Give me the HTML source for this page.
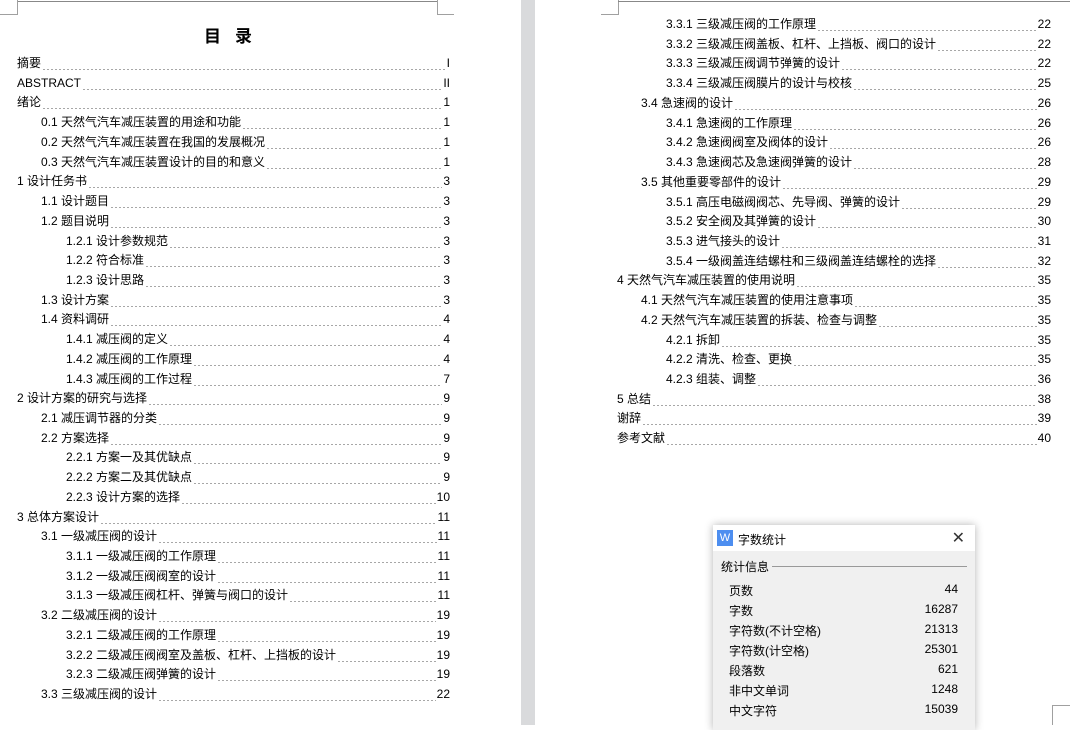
<!DOCTYPE html>
<html><head><meta charset="utf-8"><style>
*{margin:0;padding:0;box-sizing:border-box}
body{width:1070px;height:725px;position:relative;overflow:hidden;background:#fff;font-family:"Liberation Serif","Noto Serif CJK SC","Noto Sans CJK SC",serif;font-size:12px;color:#000}
.gap{position:absolute;left:521px;top:0;width:14px;height:725px;background:#d9dadc}
.ln{position:absolute;background:#a0a0a0}
.row{position:absolute;height:16px;display:flex;align-items:flex-end;line-height:14px;white-space:nowrap}
.row .t{font-family:"Liberation Sans","Noto Sans CJK SC",sans-serif}
.row .d{flex:1;height:14px;background-image:radial-gradient(circle,#333 0.6px,transparent 0.9px);background-size:4px 4px;background-position:0 12px;background-repeat:repeat-x;margin:0 1px}
.row .p{font-family:"Liberation Sans",sans-serif}
.title{position:absolute;left:0;width:470px;top:22px;text-align:center;font-size:17px;font-weight:bold;font-family:"Liberation Sans","Noto Sans CJK SC",sans-serif;letter-spacing:14px}
.dlg{position:absolute;left:713px;top:525px;width:262px;height:205px;background:#f0f0f0;box-shadow:0 0 8px rgba(0,0,0,.3);font-family:"Liberation Sans","Noto Sans CJK SC",sans-serif;font-size:12px}
.dlg .hd{height:26px;background:#fff;position:relative}
.dlg .ic{position:absolute;left:4px;top:5px;width:16px;height:16px;background:#4d8ef0;color:#fff;font-size:11px;text-align:center;line-height:16px}
.dlg .ht{position:absolute;left:25px;top:6px}
.dlg .x{position:absolute;right:10px;top:3px;font-size:16px;color:#333}
.dlg .sec{position:absolute;left:8px;top:33px}
.dlg .sl{position:absolute;left:59px;top:41px;width:195px;border-top:1px solid #999}
.dlg .r{position:absolute;left:16px;width:229px;display:flex;justify-content:space-between}
</style></head><body>
<div class="gap"></div>
<div class="ln" style="left:17px;top:1px;width:420px;height:1px;background:#888"></div>
<div class="ln" style="left:0;top:14px;width:17px;height:1px"></div>
<div class="ln" style="left:17px;top:0;width:1px;height:15px"></div>
<div class="ln" style="left:437px;top:0;width:1px;height:15px"></div>
<div class="ln" style="left:437px;top:14px;width:17px;height:1px"></div>
<div class="ln" style="left:601px;top:14px;width:17px;height:1px"></div>
<div class="ln" style="left:618px;top:0;width:1px;height:15px"></div>
<div class="ln" style="left:618px;top:1px;width:452px;height:1px;background:#888"></div>
<div class="ln" style="left:1052px;top:705px;width:1px;height:20px"></div>
<div class="ln" style="left:1052px;top:705px;width:18px;height:1px"></div>
<div class="title">目录</div>
<div id="L"></div>
<div class="dlg">
<div class="hd"><div class="ic">W</div><div class="ht">字数统计</div><div class="x">✕</div></div>
<div class="sec">统计信息</div><div class="sl"></div>
<div class="r" style="top:57px"><span>页数</span><span>44</span></div>
<div class="r" style="top:77px"><span>字数</span><span>16287</span></div>
<div class="r" style="top:97px"><span>字符数(不计空格)</span><span>21313</span></div>
<div class="r" style="top:117px"><span>字符数(计空格)</span><span>25301</span></div>
<div class="r" style="top:137px"><span>段落数</span><span>621</span></div>
<div class="r" style="top:157px"><span>非中文单词</span><span>1248</span></div>
<div class="r" style="top:177px"><span>中文字符</span><span>15039</span></div>
</div>
<script>
var left=[[0,"摘要","I"],[0,"ABSTRACT","II"],[0,"绪论","1"],[1,"0.1 天然气汽车减压装置的用途和功能","1"],[1,"0.2 天然气汽车减压装置在我国的发展概况","1"],[1,"0.3 天然气汽车减压装置设计的目的和意义","1"],[0,"1 设计任务书","3"],[1,"1.1 设计题目","3"],[1,"1.2 题目说明","3"],[2,"1.2.1 设计参数规范","3"],[2,"1.2.2 符合标准","3"],[2,"1.2.3 设计思路","3"],[1,"1.3 设计方案","3"],[1,"1.4 资料调研","4"],[2,"1.4.1 减压阀的定义","4"],[2,"1.4.2 减压阀的工作原理","4"],[2,"1.4.3 减压阀的工作过程","7"],[0,"2 设计方案的研究与选择","9"],[1,"2.1 减压调节器的分类","9"],[1,"2.2 方案选择","9"],[2,"2.2.1 方案一及其优缺点","9"],[2,"2.2.2 方案二及其优缺点","9"],[2,"2.2.3 设计方案的选择","10"],[0,"3 总体方案设计","11"],[1,"3.1 一级减压阀的设计","11"],[2,"3.1.1 一级减压阀的工作原理","11"],[2,"3.1.2 一级减压阀阀室的设计","11"],[2,"3.1.3 一级减压阀杠杆、弹簧与阀口的设计","11"],[1,"3.2 二级减压阀的设计","19"],[2,"3.2.1 二级减压阀的工作原理","19"],[2,"3.2.2 二级减压阀阀室及盖板、杠杆、上挡板的设计","19"],[2,"3.2.3 二级减压阀弹簧的设计","19"],[1,"3.3 三级减压阀的设计","22"]];
var right=[[2,"3.3.1 三级减压阀的工作原理","22"],[2,"3.3.2 三级减压阀盖板、杠杆、上挡板、阀口的设计","22"],[2,"3.3.3 三级减压阀调节弹簧的设计","22"],[2,"3.3.4  三级减压阀膜片的设计与校核","25"],[1,"3.4 急速阀的设计","26"],[2,"3.4.1 急速阀的工作原理","26"],[2,"3.4.2 急速阀阀室及阀体的设计","26"],[2,"3.4.3 急速阀芯及急速阀弹簧的设计","28"],[1,"3.5 其他重要零部件的设计","29"],[2,"3.5.1 高压电磁阀阀芯、先导阀、弹簧的设计","29"],[2,"3.5.2 安全阀及其弹簧的设计","30"],[2,"3.5.3 进气接头的设计","31"],[2,"3.5.4 一级阀盖连结螺柱和三级阀盖连结螺栓的选择","32"],[0,"4 天然气汽车减压装置的使用说明","35"],[1,"4.1 天然气汽车减压装置的使用注意事项","35"],[1,"4.2 天然气汽车减压装置的拆装、检查与调整","35"],[2,"4.2.1 拆卸","35"],[2,"4.2.2 清洗、检查、更换","35"],[2,"4.2.3 组装、调整","36"],[0,"5 总结","38"],[0,"谢辞","39"],[0,"参考文献","40"]];
var h="";
function add(list,x0,xr,y0){list.forEach(function(e,i){var x=x0+[0,24,49][e[0]];var y=y0+i*19.72-9;
h+='<div class="row" style="left:'+x+'px;top:'+y.toFixed(1)+'px;width:'+(xr-x)+'px"><span class="t">'+e[1]+'</span><span class="d"></span><span class="p">'+e[2]+'</span></div>';});}
add(left,17,450,63);add(right,617,1051,24);
document.getElementById("L").innerHTML=h;
</script>
</body></html>
